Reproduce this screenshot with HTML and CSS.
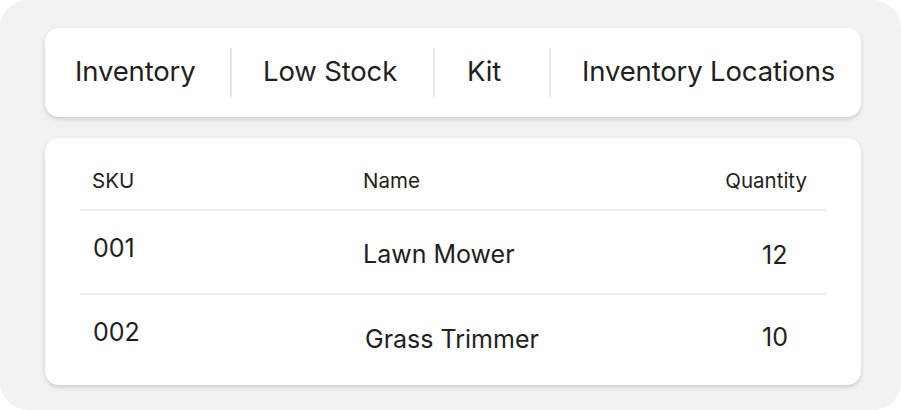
FILE: index.html
```html
<!DOCTYPE html>
<html>
<head>
<meta charset="utf-8">
<link rel="stylesheet" href="styles.css">
</head>
<body>
<div class="frame">
  <nav class="tabs">
    <div class="tab tab-inventory">Inventory</div>
    <div class="tab tab-low">Low Stock</div>
    <div class="tab tab-kit">Kit</div>
    <div class="tab tab-locations">Inventory Locations</div>
  </nav>
  <section class="table-card">
    <div class="row head">
      <div class="cell c-sku">SKU</div>
      <div class="cell c-name">Name</div>
      <div class="cell c-qty">Quantity</div>
    </div>
    <div class="row item item-1">
      <div class="cell c-sku">001</div>
      <div class="cell c-name">Lawn Mower</div>
      <div class="cell c-qty">12</div>
    </div>
    <div class="row item item-2">
      <div class="cell c-sku">002</div>
      <div class="cell c-name">Grass Trimmer</div>
      <div class="cell c-qty">10</div>
    </div>
  </section>
</div>
</body>
</html>
```
FILE: styles.css
```css
html, body {
  margin: 0;
  padding: 0;
  background: #ffffff;
}
body {
  font-family: Inter, "Noto Sans", "Liberation Sans", sans-serif;
  color: #1f1f21;
}
.frame {
  width: 901px;
  height: 410px;
  box-sizing: border-box;
  background: #f2f2f2;
  border-radius: 28px;
  padding: 28px 40px 0 45px;
  overflow: hidden;
}
.tabs {
  height: 89px;
  background: #ffffff;
  border-radius: 14px;
  box-shadow: 0 2px 4px rgba(0, 0, 0, 0.16);
  display: flex;
  align-items: center;
}
.tab {
  font-size: 27.5px;
  line-height: 46px;
  height: 49px;
  letter-spacing: -0.15px;
  white-space: nowrap;
  box-sizing: border-box;
}
.tab + .tab {
  border-left: 2px solid #e6e6e6;
}
.tab-inventory { width: 185px; padding-left: 30px; }
.tab-low { width: 203px; padding-left: 31px; }
.tab-kit { width: 116px; padding-left: 32px; }
.tab-locations { flex: 1; padding-left: 31px; }

.table-card {
  margin-top: 21px;
  height: 247px;
  background: #ffffff;
  border-radius: 14px;
  box-shadow: 0 2px 4px rgba(0, 0, 0, 0.16);
  padding: 0 34px 0 35px;
  box-sizing: border-box;
}
.row {
  display: grid;
  grid-template-columns: 283px 1fr 200px;
  align-items: start;
  box-sizing: border-box;
}
.row.head {
  height: 73px;
  font-size: 20.5px;
  line-height: 24px;
  border-bottom: 2px solid #eeeeee;
}
.row.item {
  font-size: 25px;
  line-height: 30px;
}
.row.item-1 {
  height: 84px;
  border-bottom: 2px solid #eeeeee;
}
.row.item-2 {
  height: 88px;
}
.cell { white-space: nowrap; }
.head .cell { padding-top: 31px; }
.head .c-sku { padding-left: 12px; }
.head .c-qty { text-align: right; padding-right: 20px; }
.item .c-sku { padding-left: 13px; padding-top: 22px; }
.item .c-name { padding-top: 28px; }
.item .c-qty { padding-top: 29px; padding-left: 135px; }
.item-2 .c-sku { padding-top: 22px; }
.item-2 .c-name { padding-top: 29px; padding-left: 2px; }
.item-2 .c-qty { padding-top: 27px; }
```
